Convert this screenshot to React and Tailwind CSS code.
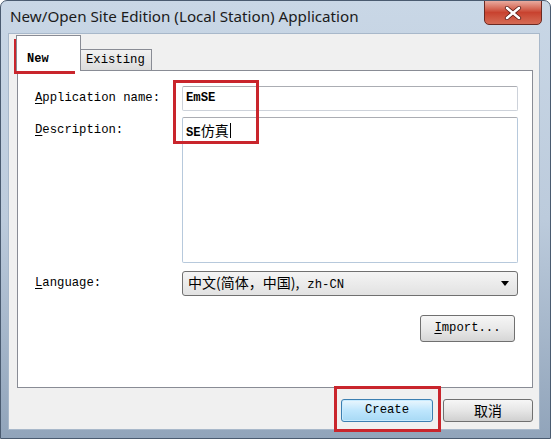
import React from "react";

const CloseGlyph = () => (
  <svg width="20" height="14" viewBox="0 0 20 14">
    <path d="M4 2 L16 12 M16 2 L4 12" stroke="#5a1a14" strokeWidth="4.2" strokeLinecap="round" />
    <path d="M4 2 L16 12 M16 2 L4 12" stroke="#ffffff" strokeWidth="2.6" strokeLinecap="round" />
  </svg>
);

const Cjk = ({ children }) => (
  <span className="font-['Noto_Sans_CJK_SC',sans-serif] text-[14px] font-normal">{children}</span>
);

const App = () => {
  return (
    <div className="relative w-[551px] h-[439px] overflow-hidden rounded-t-[7px] border border-[#4a5b70] bg-gradient-to-b from-[#c9d7e6] via-[#bccbdc] to-[#91a4ba] font-['Liberation_Mono','Noto_Sans_CJK_SC',monospace] text-[12.25px] text-black">
      {/* Title bar */}
      <div className="h-[32px] flex items-center pl-[9px] pb-[2px] font-['Noto_Sans',sans-serif] text-[15.2px] text-[#1b1b1b]">
        New/Open Site Edition (Local Station) Application
      </div>
      <div className="absolute top-[-1px] right-[8px] w-[58px] h-[25px] rounded-b-[5px] border border-[#6b2a22] bg-gradient-to-b from-[#e8aa9f] via-[#c8422f] to-[#d56b55] flex items-center justify-center">
        <CloseGlyph />
      </div>

      {/* Client area */}
      <div className="ml-[7px] mr-[10px] h-[397px] bg-[#f0f0f0] border border-[#a8b8ca] pl-[8px] pt-[1px]">
        {/* Tabs */}
        <div className="flex items-end h-[35px]">
          <div className="relative z-10 -mb-px ml-[-1px] w-[65px] h-[36px] bg-white border border-b-0 border-[#898c95] pl-[10px] pt-[14px] font-bold text-[12px]">
            New
          </div>
          <div className="w-[71px] h-[21px] bg-gradient-to-b from-[#f2f2f2] to-[#dcdcdc] border border-b-0 border-l-0 border-[#898c95] pl-[5px] pt-[3px] leading-[15px]">
            Existing
          </div>
        </div>

        {/* Tab panel */}
        <div className="w-[516px] h-[318px] bg-white border border-[#898c95] pl-[17px] pt-[15px]">
          <div className="flex items-center h-[25px]">
            <div className="w-[147px]">
              <span className="underline underline-offset-2">A</span>pplication name:
            </div>
            <div className="w-[336px] h-[25px] border border-[#cdd2da] border-t-[#abadb3] rounded-[2px] px-[3px] flex items-center font-bold">
              EmSE
            </div>
          </div>

          <div className="flex mt-[6px]">
            <div className="w-[147px] pt-[4px]">
              <span className="underline underline-offset-2">D</span>escription:
            </div>
            <div className="w-[336px] h-[146px] border border-[#b7c9dc] border-t-[#abadb3] rounded-[2px] px-[3px] pt-[2px]">
              <span className="inline-flex items-baseline h-[20px] leading-[20px]">
                <span className="font-bold">SE</span>
                <Cjk>仿真</Cjk>
                <span className="inline-block self-center w-px h-[15px] bg-black ml-px" />
              </span>
            </div>
          </div>

          <div className="flex items-center mt-[8px]">
            <div className="w-[147px]">
              <span className="underline underline-offset-2">L</span>anguage:
            </div>
            <div className="w-[336px] h-[25px] border border-[#707070] rounded-[3px] bg-gradient-to-b from-[#f4f4f4] to-[#e2e2e2] pl-[5px] pr-[8px] flex items-center justify-between">
              <span className="inline-flex items-baseline leading-[20px]">
                <Cjk>中文(简体，中国),</Cjk>
                <span className="ml-[8px]">zh-CN</span>
              </span>
              <svg width="8" height="5" viewBox="0 0 8 5">
                <path d="M0 0 L8 0 L4 5 Z" fill="#000" />
              </svg>
            </div>
          </div>

          <div className="flex justify-end mt-[19px] pr-[17px]">
            <div className="w-[95px] h-[27px] border border-[#707070] rounded-[3px] bg-gradient-to-b from-[#f6f6f6] via-[#e9e9e9] to-[#d6d6d6] flex items-center justify-center">
              <span>
                <span className="underline underline-offset-2">I</span>mport...
              </span>
            </div>
          </div>
        </div>

        {/* Bottom buttons */}
        <div className="flex justify-end gap-[10px] mt-[11px] pr-[6px]">
          <div className="w-[92px] h-[23px] border border-[#3c7fb1] rounded-[3px] bg-gradient-to-b from-[#eaf6fd] via-[#bee6fd] to-[#a7d9f5] shadow-[inset_0_0_0_1px_#c8ebff] flex items-center justify-center">
            Create
          </div>
          <div className="w-[90px] h-[23px] border border-[#707070] rounded-[3px] bg-gradient-to-b from-[#f6f6f6] via-[#e6e6e6] to-[#d0d0d0] flex items-center justify-center">
            <Cjk>取消</Cjk>
          </div>
        </div>
      </div>

      {/* Red annotation boxes */}
      <div className="absolute left-[13px] top-[38px] w-[61px] h-[35px] border-[3px] border-[#c9252c]" />
      <div className="absolute left-[172px] top-[79px] w-[86px] h-[64px] border-[3px] border-[#c9252c]" />
      <div className="absolute left-[333px] top-[385px] w-[107px] h-[46px] border-[3px] border-[#c9252c]" />
    </div>
  );
};

export default App;
